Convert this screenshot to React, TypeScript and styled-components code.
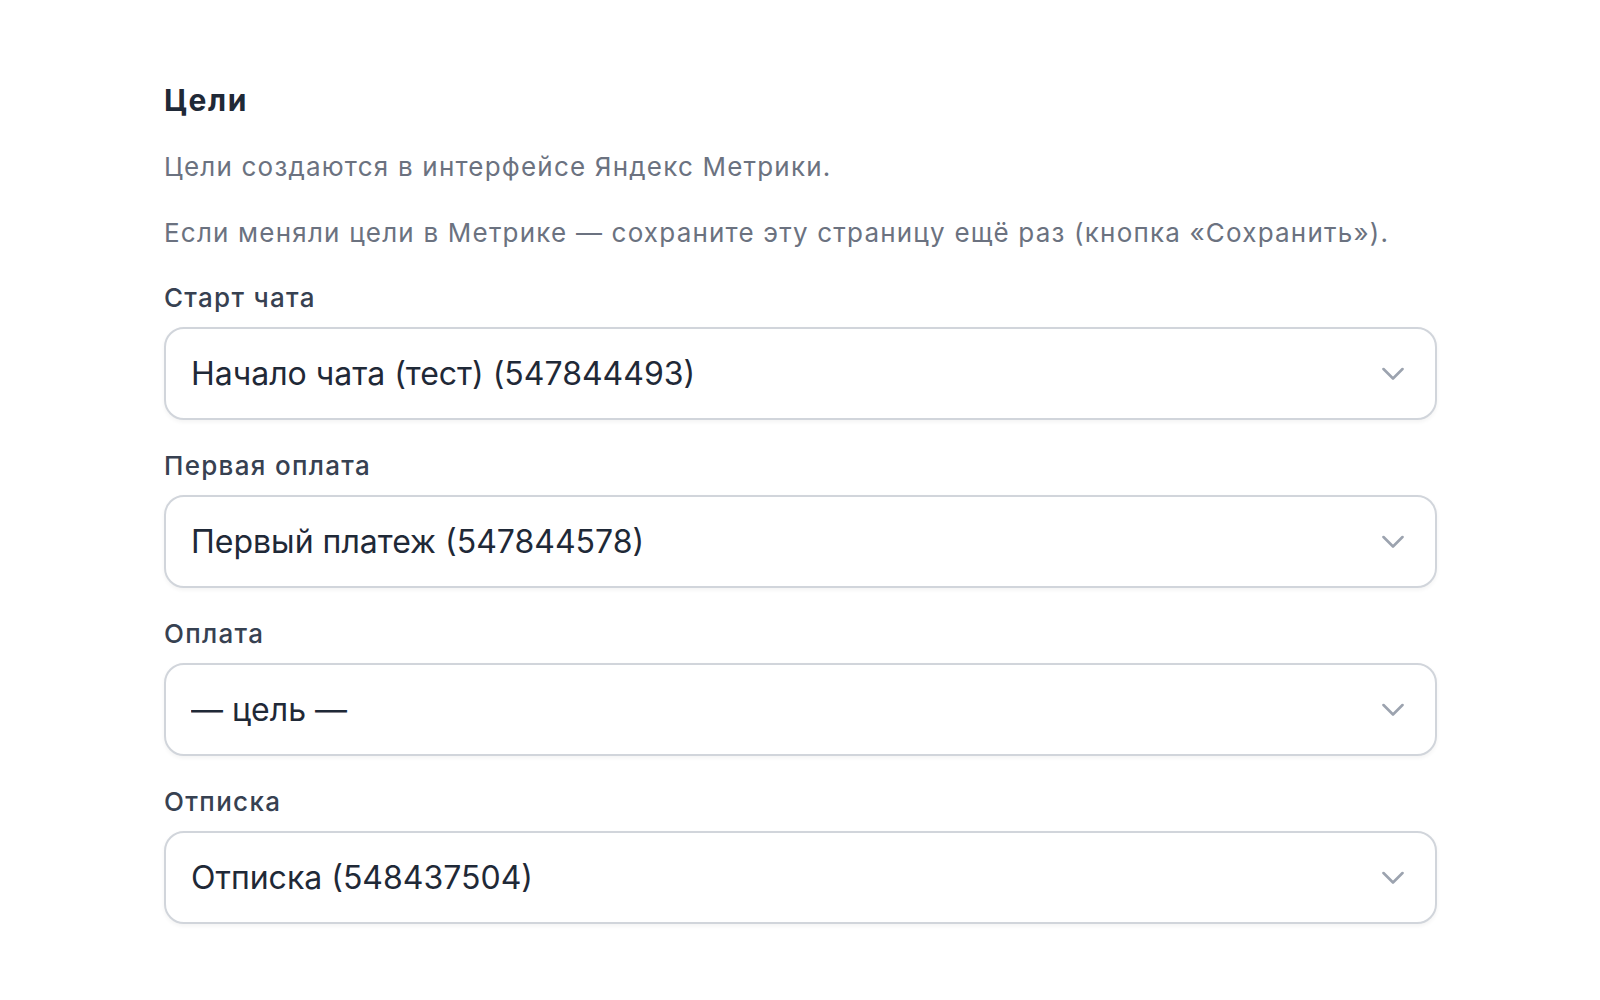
import { createGlobalStyle } from "styled-components";
import styled from "styled-components";

type Goal = {
  id: string;
  label: string;
  value: string;
};

const goalOptions = [
  "— цель —",
  "Начало чата (тест) (547844493)",
  "Первый платеж (547844578)",
  "Отписка (548437504)",
];

const goals: Goal[] = [
  { id: "chat_start", label: "Старт чата", value: "Начало чата (тест) (547844493)" },
  { id: "first_payment", label: "Первая оплата", value: "Первый платеж (547844578)" },
  { id: "payment", label: "Оплата", value: "— цель —" },
  { id: "unsubscribe", label: "Отписка", value: "Отписка (548437504)" },
];

const GlobalStyle = createGlobalStyle`
  body {
    margin: 0;
    background: #ffffff;
    font-family: Inter, "Noto Sans", "Liberation Sans", sans-serif;
    -webkit-font-smoothing: antialiased;
  }
  * {
    box-sizing: border-box;
  }
`;

export default function App() {
  return (
    <>
      <GlobalStyle />
      <Page>
        <Section>
          <Title>Цели</Title>
          <Hint>Цели создаются в интерфейсе Яндекс Метрики.</Hint>
          <Hint>
            Если меняли цели в Метрике — сохраните эту страницу ещё раз (кнопка «Сохранить»).
          </Hint>
          {goals.map((goal) => (
            <Field key={goal.id}>
              <Label htmlFor={goal.id}>{goal.label}</Label>
              <SelectWrap>
                <Select id={goal.id} defaultValue={goal.value}>
                  {goalOptions.map((opt) => (
                    <option key={opt} value={opt}>
                      {opt}
                    </option>
                  ))}
                </Select>
                <Chevron width="22" height="13" viewBox="0 0 22 13" fill="none">
                  <path
                    d="M1.5 1.5L11 11L20.5 1.5"
                    stroke="currentColor"
                    strokeWidth="2.6"
                    strokeLinecap="round"
                    strokeLinejoin="round"
                  />
                </Chevron>
              </SelectWrap>
            </Field>
          ))}
        </Section>
      </Page>
    </>
  );
}

export const Page = styled.div`
  padding: 80px 163px 60px 164px;
`;

export const Section = styled.section`
  display: flex;
  flex-direction: column;
  gap: 28px;
`;

export const Title = styled.h2`
  margin: 0;
  font-size: 30px;
  line-height: 40px;
  font-weight: 700;
  letter-spacing: 1.6px;
  color: #1f2937;
`;

export const Hint = styled.p`
  margin: 0;
  font-size: 26px;
  line-height: 38px;
  font-weight: 400;
  letter-spacing: 1.2px;
  color: #6b7280;
`;

export const Field = styled.div`
  display: flex;
  flex-direction: column;
  gap: 11px;
`;

export const Label = styled.label`
  font-size: 26px;
  line-height: 36px;
  font-weight: 500;
  letter-spacing: 1.3px;
  color: #374151;
`;

export const SelectWrap = styled.div`
  position: relative;
`;

export const Select = styled.select`
  appearance: none;
  -webkit-appearance: none;
  width: 100%;
  height: 93px;
  padding: 0 70px 0 25px;
  border: 2px solid #d1d5db;
  border-radius: 20px;
  background: #ffffff;
  box-shadow: 0 2px 4px rgba(0, 0, 0, 0.05);
  font-family: inherit;
  font-size: 32px;
  font-weight: 400;
  color: #1f2937;
  outline: none;
  cursor: pointer;
`;

export const Chevron = styled.svg`
  position: absolute;
  right: 33px;
  top: 50%;
  transform: translateY(-50%);
  color: #9ca3af;
  pointer-events: none;
`;
